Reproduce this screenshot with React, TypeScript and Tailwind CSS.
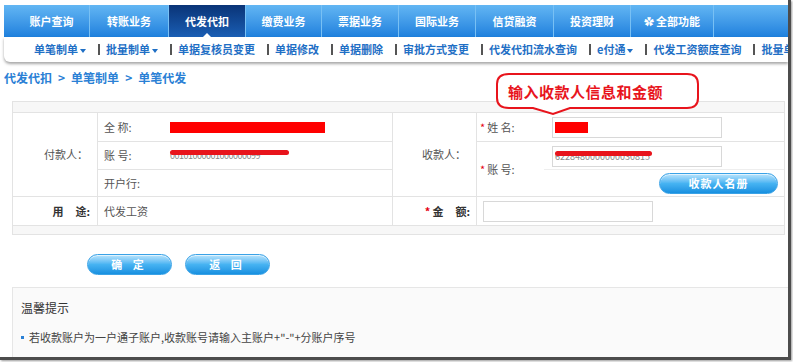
import React from "react";

const NAV = [
  { label: "账户查询", cls: "w-[86px] pl-[10px]" },
  { label: "转账业务", cls: "w-[79px]" },
  { label: "代发代扣", cls: "w-[77px]", active: true },
  { label: "缴费业务", cls: "w-[76px]" },
  { label: "票据业务", cls: "w-[77px]" },
  { label: "国际业务", cls: "w-[77px]" },
  { label: "信贷融资", cls: "w-[78px]" },
  { label: "投资理财", cls: "w-[77px]" },
  { label: "全部功能", cls: "w-[83px]", all: true },
];

const SUB = [
  { t: "单笔制单", arrow: true },
  { t: "批量制单", arrow: true },
  { t: "单据复核员变更" },
  { t: "单据修改" },
  { t: "单据删除" },
  { t: "审批方式变更" },
  { t: "代发代扣流水查询" },
  { t: "e付通", arrow: true },
  { t: "代发工资额度查询" },
  { t: "批量单据复核" },
];

function Arrow() {
  return (
    <span className="ml-[2px] mt-[2px] inline-block w-0 h-0 border-l-[3px] border-r-[3px] border-t-[4px] border-l-transparent border-r-transparent border-t-[#1f6fc5]" />
  );
}

function Star() {
  return <span className="text-[#e60012] text-[11px] mr-[2px]">*</span>;
}

function PillButton({ label, cls }: { label: string; cls: string }) {
  return (
    <button
      className={`h-[21px] rounded-full bg-gradient-to-b from-[#b8e4fc] via-[#46b3f2] to-[#1690e0] border border-[#3aa2e6] text-white text-[11px] font-bold shadow-[inset_0_1px_0_rgba(255,255,255,0.6)] ${cls}`}
    >
      {label}
    </button>
  );
}

export default function App() {
  return (
    <div className="w-[793px] h-[362px] bg-white overflow-hidden font-['Noto_Sans_CJK_SC','Liberation_Sans',sans-serif]">
      <div className="relative w-[791px] h-[360px] bg-white border-r-[3px] border-b-[3px] border-[#4c4c4c] shadow-[1px_1px_2px_rgba(0,0,0,0.4)] overflow-hidden">
        <div className="pt-[5px] pl-[4px]">
          {/* top nav */}
          <div className="flex h-[32px] bg-gradient-to-b from-[#62b6f3] to-[#1d80dd]">
            {NAV.map((n) => (
              <div
                key={n.label}
                className={`relative flex shrink-0 items-center justify-center h-full border-r border-[#78c0f4] text-white text-[11px] font-bold ${n.cls} ${
                  n.active ? "bg-gradient-to-b from-[#0a3477] to-[#1a5eb4] border-[#1a5eb4]" : ""
                }`}
              >
                {n.all && <span className="mr-[2px] text-[10px]">✿</span>}
                {n.label}
                {n.active && (
                  <span className="absolute bottom-0 left-1/2 -translate-x-1/2 w-0 h-0 border-l-[4px] border-r-[4px] border-b-[4px] border-l-transparent border-r-transparent border-b-white" />
                )}
              </div>
            ))}
          </div>
          {/* sub nav */}
          <div className="flex items-center h-[25px] pl-[30px] bg-white rounded-bl-[6px] shadow-[0_2px_3px_rgba(0,0,0,0.35)] whitespace-nowrap overflow-hidden text-[11px] font-bold text-[#1f6fc5]">
            {SUB.map((s, i) => (
              <React.Fragment key={s.t}>
                {i > 0 && <span className="shrink-0 ml-[12px] mr-[6px] inline-block w-[2px] h-[11px] bg-[#555]" />}
                <span className="shrink-0 flex items-center">
                  {s.t}
                  {s.arrow && <Arrow />}
                </span>
              </React.Fragment>
            ))}
          </div>

          {/* breadcrumb */}
          <div className="mt-[8px] h-[16px] flex items-center text-[12px] font-bold text-[#2a80d5]">
            代发代扣 <span className="mx-[6px]">&gt;</span> 单笔制单 <span className="mx-[6px]">&gt;</span> 单笔代发
          </div>

          {/* form table */}
          <div className="mt-[15px] ml-[8px] w-[773px] border border-[#e3e3e3] text-[11px] text-[#555]">
            <div className="h-[11px] bg-[#f7f7f7] border-b border-[#e3e3e3]" />
            <div className="flex h-[84px] border-b border-[#e3e3e3]">
              <div className="w-[85px] border-r border-[#e3e3e3] flex items-center justify-end pr-[9px]">付款人：</div>
              <div className="w-[295px] border-r border-[#e3e3e3] flex flex-col">
                <div className="h-[29px] border-b border-[#e3e3e3] flex items-center pl-[6px]">
                  <span className="w-[66px]">全 称:</span>
                  <span className="inline-block w-[155px] h-[11px] bg-[#ff0000]" />
                </div>
                <div className="h-[28px] border-b border-[#e3e3e3] flex items-center pl-[6px]">
                  <span className="w-[66px]">账 号:</span>
                  <span className="relative text-[9px] text-[#888] leading-none tracking-[-0.5px]">
                    00101000001000000099
                    <span className="absolute left-0 top-[-1px] w-[119px] h-[5px] rounded-full bg-[#e8141c]" />
                  </span>
                </div>
                <div className="flex-1 flex items-center pl-[6px]">开户行:</div>
              </div>
              <div className="w-[84px] border-r border-[#e3e3e3] flex items-center justify-end pr-[10px]">收款人：</div>
              <div className="flex-1 flex flex-col">
                <div className="h-[29px] border-b border-[#e3e3e3] flex items-center pl-[3px]">
                  <span className="w-[72px] flex items-center">
                    <Star />姓 名:
                  </span>
                  <div className="w-[170px] h-[21px] border border-[#d8d8d8] bg-white flex items-center pl-[2px]">
                    <span className="inline-block w-[33px] h-[11px] bg-[#ff0000]" />
                  </div>
                </div>
                <div className="flex-1 flex">
                  <div className="w-[67px] flex items-center pl-[3px]">
                    <Star />账 号:
                  </div>
                  <div className="flex-1 flex flex-col">
                    <div className="h-[28px] border-b border-[#eeeeee] pl-[8px] pt-[4px]">
                      <div className="w-[170px] h-[21px] border border-[#d8d8d8] bg-white flex items-center pl-[2px]">
                        <span className="relative text-[9px] text-[#888] leading-none">
                          6228480000000030815
                          <span className="absolute left-0 top-[-1px] w-[97px] h-[5px] rounded-full bg-[#e8141c]" />
                        </span>
                      </div>
                    </div>
                    <div className="flex-1 flex items-start justify-end pt-[3px] pr-[6px]">
                      <PillButton label="收款人名册" cls="w-[119px] tracking-[1px]" />
                    </div>
                  </div>
                </div>
              </div>
            </div>
            <div className="flex h-[29px] border-b border-[#e3e3e3]">
              <div className="w-[85px] border-r border-[#e3e3e3] flex items-center justify-end pr-[7px] font-bold text-[#333]">
                用<span className="ml-[12px]">途:</span>
              </div>
              <div className="w-[295px] border-r border-[#e3e3e3] flex items-center pl-[6px]">代发工资</div>
              <div className="w-[84px] border-r border-[#e3e3e3] flex items-center justify-end pr-[6px] font-bold text-[#333]">
                <Star />金<span className="ml-[12px]">额:</span>
              </div>
              <div className="flex-1 flex items-center pl-[6px]">
                <div className="w-[170px] h-[21px] border border-[#d8d8d8] bg-white" />
              </div>
            </div>
            <div className="h-[8px] bg-[#f7f7f7]" />
          </div>

          {/* buttons */}
          <div className="flex gap-[13px] mt-[19px] ml-[83px]">
            <PillButton label="确 定" cls="w-[85px] tracking-[4px]" />
            <PillButton label="返 回" cls="w-[85px] tracking-[4px]" />
          </div>

          {/* tips */}
          <div className="mt-[12px] ml-[8px] h-[80px] bg-[#fafafa] border-t border-l border-[#e6e6e6] pl-[8px]">
            <div className="pt-[11px] text-[12px] text-[#333]">温馨提示</div>
            <div className="mt-[12px] flex items-center text-[11px] text-[#444]">
              <span className="inline-block w-[3px] h-[3px] bg-[#2a80d5] mr-[5px]" />
              若收款账户为一户通子账户,收款账号请输入主账户+"-"+分账户序号
            </div>
          </div>
        </div>

        {/* callout annotation */}
        <div className="absolute left-[495px] top-[72px] w-[206px] h-[46px]">
          <svg width="206" height="46" viewBox="0 0 206 46" className="absolute inset-0">
            <path
              d="M14 2 H192 Q203 2 203 12 V26 Q203 36 192 36 H75 L58 42 L38 36 H14 Q2 36 2 26 V12 Q2 2 14 2 Z"
              fill="white"
              stroke="#e8141c"
              strokeWidth="2"
            />
          </svg>
          <div className="absolute left-[13px] top-[11px] text-[15px] leading-[18px] font-bold text-[#e8141c] tracking-[0.5px] whitespace-nowrap">
            输入收款人信息和金额
          </div>
        </div>
      </div>
    </div>
  );
}
